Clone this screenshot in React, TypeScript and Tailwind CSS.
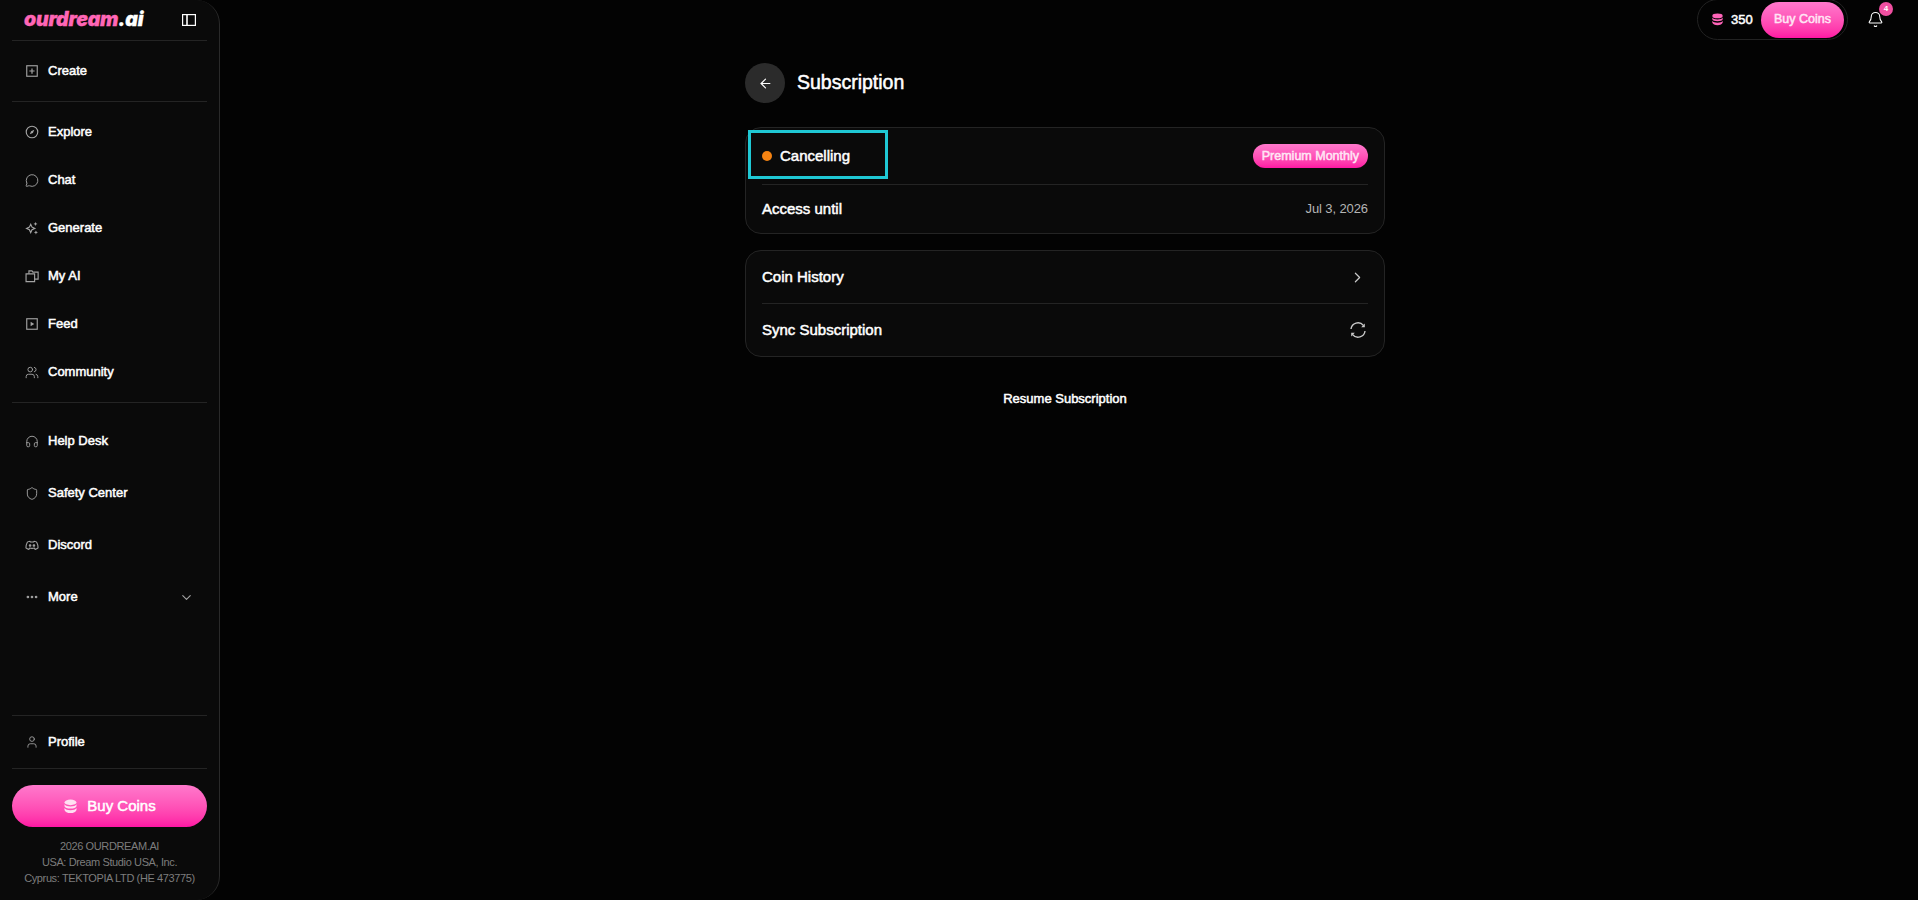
import { ArrowLeft, Bell, ChevronDown, ChevronRight, Ellipsis, Headphones, MessageCircle, Shield, User, Users } from "lucide-react";
import type { ReactNode } from "react";

const svgBase = { width: 16, height: 16, viewBox: "0 0 16 16", fill: "none", stroke: "currentColor", strokeWidth: 1.3 };

const SquarePlusIcon = () => (
  <svg {...svgBase}><rect x="2" y="2" width="12" height="12" /><path d="M8 5v6M5 8h6" strokeWidth="1.4" /></svg>
);
const CompassIcon = () => (
  <svg {...svgBase}><circle cx="8" cy="8" r="6.6" /><path d="M10.6 5.4 9 9 5.4 10.6 7 7Z" fill="currentColor" stroke="none" /></svg>
);
const SparkIcon = () => (
  <svg {...svgBase}>
    <path d="M6.5 3.8 8 7 11.2 8.5 8 10 6.5 13.2 5 10 1.8 8.5 5 7Z" />
    <path d="M12 1l.7 1.6 1.6.7-1.6.7L12 5.6l-.7-1.6-1.6-.7 1.6-.7Z" fill="currentColor" stroke="none" />
    <path d="M12.5 10.8l.7 1.6 1.6.7-1.6.7-.7 1.6-.7-1.6-1.6-.7 1.6-.7Z" fill="currentColor" stroke="none" />
  </svg>
);
const FoldersIcon = () => (
  <svg {...svgBase}>
    <path d="M1.2 5.5h9.8v9H1.2Z" />
    <path d="M4.5 5.5V2.2h3.5l1 1.3h6v8h-4" />
  </svg>
);
const PlaySquareIcon = () => (
  <svg {...svgBase}><rect x="2" y="2" width="12" height="12" /><path d="M6.4 5.4 10.6 8 6.4 10.6Z" fill="currentColor" stroke="none" /></svg>
);
const PanelIcon = () => (
  <svg width="14" height="14" viewBox="0 0 14 14" fill="none" stroke="currentColor" strokeWidth="1.2"><rect x=".6" y="1.6" width="12.8" height="10.8" /><path d="M5 1.6v10.8" strokeWidth="1.6" /></svg>
);
const Discord = () => (
  <svg width="16" height="16" viewBox="0 0 24 24" fill="none" stroke="currentColor" strokeWidth="1.8" strokeLinejoin="round" strokeLinecap="round">
    <path d="M8.5 5.5 C6.5 5.8 5 6.4 4 7.2 C2.4 10 1.4 13.4 1.6 17 C3 18.4 4.8 19.2 6.6 19.5 L8 17.2 C10.5 17.9 13.5 17.9 16 17.2 L17.4 19.5 C19.2 19.2 21 18.4 22.4 17 C22.6 13.4 21.6 10 20 7.2 C19 6.4 17.5 5.8 15.5 5.5 L14.8 7 C13 6.7 11 6.7 9.2 7 Z" />
    <circle cx="8.7" cy="12.8" r="1.4" fill="currentColor" />
    <circle cx="15.3" cy="12.8" r="1.4" fill="currentColor" />
  </svg>
);
const Coins = ({ size }: { size: number }) => (
  <svg width={size} height={size} viewBox="0 0 16 16" fill="currentColor">
    <ellipse cx="8" cy="3.6" rx="6.4" ry="3" />
    <path d="M1.6 5.6C2.6 7.3 5 8 8 8s5.4-.7 6.4-2.4V7.6C14 9.4 11.2 10 8 10S2 9.4 1.6 7.6Z" />
    <path d="M1.6 9.6C2.6 11.3 5 12 8 12s5.4-.7 6.4-2.4v2C14 13.6 11.2 15 8 15s-6-1.4-6.4-3.4Z" />
  </svg>
);
const SyncIcon = () => (
  <svg width="18" height="18" viewBox="0 0 18 18" fill="none" stroke="currentColor" strokeWidth="1.4">
    <path d="M2 8A7 7 0 0 1 14.4 4.4" />
    <path d="M16 10A7 7 0 0 1 3.6 13.6" />
    <path d="M15.8 2.6v3.6h-3.6Z" fill="currentColor" stroke="none" />
    <path d="M2.2 15.4v-3.6h3.6Z" fill="currentColor" stroke="none" />
  </svg>
);

const labelFont = "font-['Liberation_Sans',sans-serif] [-webkit-text-stroke:0.5px_currentColor]";

function NavRow({ icon, label, h, trailing }: { icon: ReactNode; label: string; h: string; trailing?: ReactNode }) {
  return (
    <div className={`flex items-center gap-[9px] pl-[25px] pr-[25px] ${h}`}>
      <span className="flex w-[14px] justify-center text-[#a3a3a3]">{icon}</span>
      <span className={`text-[13px] text-white ${labelFont}`}>{label}</span>
      {trailing && <span className="ml-auto text-[#a3a3a3]">{trailing}</span>}
    </div>
  );
}

const Rule = () => <div className="mx-3 h-px shrink-0 bg-[#242424]" />;

function Row({ left, right, h }: { left: ReactNode; right: ReactNode; h: string }) {
  return (
    <div className={`flex items-center justify-between ${h}`}>
      {left}
      {right}
    </div>
  );
}

const rowTitle = `text-[15px] text-white ${labelFont}`;

export default function App() {
  return (
    <div className="flex h-[900px] w-[1918px] overflow-hidden bg-[#030303] font-['Liberation_Sans',sans-serif]">
      <aside className="flex h-[900px] w-[220px] shrink-0 flex-col rounded-r-[24px] border-r border-[#2a2a2a] bg-[#0a0a0a]">
        <div className="flex h-10 shrink-0 items-center justify-between pl-[24px] pr-[23px]">
          <span className="font-['Inter',sans-serif] text-[19.5px] font-black italic leading-none tracking-[-0.2px] text-[#ff66b6] [-webkit-text-stroke:0.3px_currentColor]">
            ourdream<span className="text-white">.ai</span>
          </span>
          <span className="text-white"><PanelIcon /></span>
        </div>
        <Rule />
        <NavRow h="h-[60px] shrink-0" icon={<SquarePlusIcon />} label="Create" />
        <Rule />
        <div className="flex shrink-0 flex-col pt-[6px]">
          <NavRow h="h-12" icon={<CompassIcon />} label="Explore" />
          <NavRow h="h-12" icon={<MessageCircle size={17} strokeWidth={1.6} />} label="Chat" />
          <NavRow h="h-12" icon={<SparkIcon />} label="Generate" />
          <NavRow h="h-12" icon={<FoldersIcon />} label="My AI" />
          <NavRow h="h-12" icon={<PlaySquareIcon />} label="Feed" />
          <NavRow h="h-12" icon={<Users size={17} strokeWidth={1.6} />} label="Community" />
        </div>
        <div className="h-[6px] shrink-0" />
        <Rule />
        <div className="flex shrink-0 flex-col pt-[12px]">
          <NavRow h="h-[52px]" icon={<Headphones size={17} strokeWidth={1.6} />} label="Help Desk" />
          <NavRow h="h-[52px]" icon={<Shield size={17} strokeWidth={1.6} />} label="Safety Center" />
          <NavRow h="h-[52px]" icon={<Discord />} label="Discord" />
          <NavRow h="h-[52px]" icon={<Ellipsis size={18} strokeWidth={2.6} />} label="More" trailing={<ChevronDown size={15} strokeWidth={1.8} />} />
        </div>
        <div className="flex-1" />
        <Rule />
        <NavRow h="h-[52px] shrink-0" icon={<User size={18} strokeWidth={1.5} />} label="Profile" />
        <Rule />
        <div className={`mx-3 mt-4 flex h-[42px] shrink-0 items-center justify-center gap-[9px] rounded-full bg-gradient-to-b from-[#ff78cc] to-[#ff14a4] text-[15px] text-white ${labelFont}`}>
          <span className="text-[#ffe0f2]"><Coins size={15} /></span>
          Buy Coins
        </div>
        <div className="mt-[11px] pb-[14px] text-center text-[11px] leading-4 tracking-[-0.38px] text-[#7d7d7d]">
          <div>2026 OURDREAM.AI</div>
          <div>USA: Dream Studio USA, Inc.</div>
          <div>Cyprus: TEKTOPIA LTD (HE 473775)</div>
        </div>
      </aside>

      <main className="flex min-w-0 flex-1 flex-col pr-2">
        <header className="flex h-0 justify-end pr-[26px]">
          <div className="flex h-[41px] shrink-0 -translate-y-px items-center">
            <div className="flex h-[41px] w-[151px] items-center rounded-full border border-[#222] pl-[13px] pr-[3px]">
              <span className="text-[#ff64b8]"><Coins size={13} /></span>
              <span className={`ml-[7px] text-[13px] text-white ${labelFont}`}>350</span>
              <span className={`ml-auto flex h-[36px] w-[83px] items-center justify-center rounded-full bg-gradient-to-b from-[#ff78cc] to-[#ff14a4] text-[12.5px] text-[#ffe6f5] ${labelFont}`}>Buy Coins</span>
            </div>
            <div className="relative ml-[19px] text-white">
              <Bell size={17} strokeWidth={1.5} />
              <span className="absolute -right-[9px] -top-[9px] flex h-[14px] w-[14px] items-center justify-center rounded-full bg-[#f04fa0] text-[8px] font-bold text-white">4</span>
            </div>
          </div>
        </header>

        <div className="mx-auto flex w-[640px] flex-col pt-[63px]">
          <div className="flex h-10 items-center gap-3">
            <button className="flex h-10 w-10 items-center justify-center rounded-full bg-[#2b2b2b] text-white">
              <ArrowLeft size={15} strokeWidth={1.8} />
            </button>
            <h1 className={`text-[19.5px] text-white ${labelFont}`}>Subscription</h1>
          </div>

          <section className="relative mt-6 rounded-2xl border border-[#242424] bg-[#0a0a0a] px-4">
            <Row
              h="h-[56px]"
              left={
                <div className="flex items-center gap-2">
                  <span className="h-[10px] w-[10px] rounded-full bg-[#f58312]" />
                  <span className={rowTitle}>Cancelling</span>
                </div>
              }
              right={<span className={`flex h-6 items-center rounded-full bg-gradient-to-b from-[#ff78cc] to-[#ff14a4] px-[9px] text-[12.5px] text-[#ffe6f5] ${labelFont}`}>Premium Monthly</span>}
            />
            <div className="h-px bg-[#242424]" />
            <Row h="h-[48px]" left={<span className={rowTitle}>Access until</span>} right={<span className="text-[13px] tracking-[-0.1px] text-[#b5b5b5]">Jul 3, 2026</span>} />
            <div className="absolute left-[2px] top-[2px] h-[49px] w-[140px] border-[3px] border-[#1fc8d4]" />
          </section>

          <section className="mt-4 rounded-2xl border border-[#242424] bg-[#0a0a0a] px-4">
            <Row h="h-[52px]" left={<span className={rowTitle}>Coin History</span>} right={<ChevronRight size={17} strokeWidth={1.7} className="mr-[2px] text-[#c9c9c9]" />} />
            <div className="h-px bg-[#242424]" />
            <Row h="h-[52px]" left={<span className={rowTitle}>Sync Subscription</span>} right={<span className="mr-[1px] text-[#c9c9c9]"><SyncIcon /></span>} />
          </section>

          <div className={`mt-[34px] text-center text-[13px] leading-4 text-white ${labelFont}`}>Resume Subscription</div>
        </div>
      </main>
    </div>
  );
}
